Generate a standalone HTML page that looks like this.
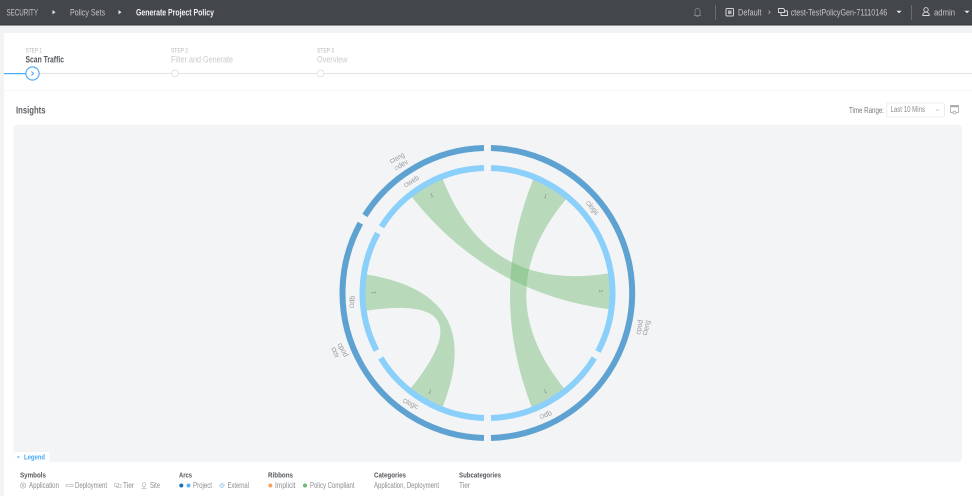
<!DOCTYPE html>
<html><head><meta charset="utf-8"><title>Generate Project Policy</title>
<style>
html,body{margin:0;padding:0;width:972px;height:496px;overflow:hidden;background:#f2f3f5}
svg{display:block;filter:blur(.3px)}
text{font-family:"Liberation Sans",sans-serif}
.h{font-size:9.5px;fill:#c4c5c7}
.s{font-size:6.5px;fill:#b5b6b8}
.d{font-size:9.5px;fill:#c9cacc}
.g{font-size:8px;fill:#8b8d91}
.b{font-size:7.5px;font-weight:bold;fill:#55585c}
.l{font-size:7.5px;fill:#9a9b9e}
.k{font-size:5.5px;fill:#888}
</style></head><body>
<svg width="972" height="496" viewBox="0 0 972 496" xmlns="http://www.w3.org/2000/svg">
<rect width="972" height="496" fill="#f2f3f5"/>
<!-- header -->
<rect width="972" height="25" fill="#43464b"/>
<rect y="24.5" width="972" height="1" fill="#33363a"/>
<text class="h" x="6.5" y="15.500" textLength="31.5" lengthAdjust="spacingAndGlyphs">SECURITY</text>
<path d="M52.5 10l3 2.2-3 2.2z" fill="#e4e4e5"/>
<text class="h" x="70" y="15.500" textLength="35" lengthAdjust="spacingAndGlyphs">Policy Sets</text>
<path d="M118.5 10l3 2.2-3 2.2z" fill="#e4e4e5"/>
<text class="h" x="136" y="15.500" textLength="78" lengthAdjust="spacingAndGlyphs" style="fill:#f4f4f4;font-weight:bold">Generate Project Policy</text>
<path d="M694 15.5h7M695 15.5v-4.5a2.5 2.5 0 0 1 5 0v4.5M696.5 16.5h2" fill="none" stroke="#7d8084" stroke-width=".9"/>
<rect x="715" y="5" width=".8" height="15" fill="#73767a"/>
<rect x="726" y="8.5" width="7.5" height="7.5" rx="1" fill="none" stroke="#d2d3d4" stroke-width="1"/>
<rect x="728" y="10.5" width="3.5" height="3.5" fill="#b5b6b8"/>
<text class="h" x="738" y="15.500" textLength="23.5" lengthAdjust="spacingAndGlyphs">Default</text>
<path d="M768.5 10.5l1.7 1.7-1.7 1.7" fill="none" stroke="#b8b9bb" stroke-width=".7"/>
<path d="M778.5 8.5h5l1 1v3h-6zM781 12.5v3h6.5v-4.5h-3" fill="none" stroke="#d8d9da" stroke-width=".9"/>
<text class="h" x="790.7" y="15.500" textLength="96.5" lengthAdjust="spacingAndGlyphs">ctest-TestPolicyGen-71110146</text>
<path d="M896.5 10.8h5l-2.500 2.500z" fill="#eee"/>
<rect x="911" y="5" width=".8" height="15" fill="#73767a"/>
<circle cx="926" cy="9.800" r="2.200" fill="none" stroke="#d8d9da" stroke-width=".9"/>
<path d="M922.800 15.500v-.8a3.200 2.500 0 0 1 6.400 0v.8z" fill="none" stroke="#d8d9da" stroke-width=".9"/>
<text class="h" x="934" y="15.500" textLength="21" lengthAdjust="spacingAndGlyphs">admin</text>
<path d="M964.500 10.800h5l-2.500 2.500z" fill="#eee"/>
<!-- panel -->
<rect x="4" y="33" width="968" height="463" fill="#fff"/>
<text class="s" x="25.500" y="52.500" textLength="16.500" lengthAdjust="spacingAndGlyphs">STEP 1</text>
<text class="s" x="171" y="52.500" textLength="17" lengthAdjust="spacingAndGlyphs">STEP 2</text>
<text class="s" x="317" y="52.500" textLength="17" lengthAdjust="spacingAndGlyphs">STEP 3</text>
<text class="d" x="25.500" y="62.500" textLength="38.500" lengthAdjust="spacingAndGlyphs" style="fill:#55585c;font-weight:bold">Scan Traffic</text>
<text class="d" x="171" y="62.500" textLength="62" lengthAdjust="spacingAndGlyphs">Filter and Generate</text>
<text class="d" x="317" y="62.500" textLength="30.500" lengthAdjust="spacingAndGlyphs">Overview</text>
<rect x="4" y="73" width="968" height="1" fill="#e3e4e6"/>
<rect x="4" y="73" width="23" height="1.200" fill="#4aa8f5"/>
<circle cx="32.500" cy="73.500" r="6.600" fill="#fff" stroke="#4aa8f5" stroke-width="1.100"/>
<path d="M31.500 71.500l2 2-2 2" fill="none" stroke="#4aa8f5" stroke-width="1"/>
<circle cx="175" cy="73.500" r="3.400" fill="#fff" stroke="#dfe0e2" stroke-width=".9"/>
<circle cx="320.500" cy="73.500" r="3.400" fill="#fff" stroke="#dfe0e2" stroke-width=".9"/>
<rect x="4" y="90" width="968" height="1" fill="#f6f7f8"/>
<text x="16" y="113.500" textLength="29.500" lengthAdjust="spacingAndGlyphs" style="font-size:10.500px;font-weight:bold;fill:#5f6266">Insights</text>
<text class="g" x="849" y="113" textLength="35" lengthAdjust="spacingAndGlyphs" style="fill:#76787c">Time Range:</text>
<rect x="886.700" y="103" width="57.800" height="14" rx="2" fill="#fff" stroke="#e6e7e9" stroke-width=".8"/>
<text class="g" x="890.500" y="112" textLength="34.500" lengthAdjust="spacingAndGlyphs">Last 10 Mins</text>
<path d="M935.800 109.300l1.500 1.500 1.500-1.500" fill="none" stroke="#b5b6b8" stroke-width=".6"/>
<rect x="950.500" y="105.500" width="8" height="7" fill="none" stroke="#a5a7aa" stroke-width=".8"/>
<rect x="950.500" y="105.500" width="8" height="1.700" fill="#a5a7aa"/>
<circle cx="954.500" cy="112.500" r="1.500" fill="#fff" stroke="#a5a7aa" stroke-width=".7"/>
<!-- chart -->
<rect x="13.500" y="124.500" width="948.500" height="337.500" rx="4" fill="#f3f4f6"/>
<g fill="#74bb76" fill-opacity=".47">
<path d="M411.700 196.700A122 122 0 0 1 442.700 179.300Q487.500 293 609.300 273.300A122 122 0 0 1 609.300 309.300Q487.500 293 411.700 196.700Z"/>
<path d="M533.300 179.300A122 122 0 0 1 566 199.300Q487.500 293 564 388.300A122 122 0 0 1 531.700 407.300Q487.500 293 533.300 179.300Z"/>
<path d="M365 274.300A122 122 0 0 0 365.700 310.700Q487.500 293 410.700 388.300A122 122 0 0 0 442.700 406.700Q487.500 293 365 274.300Z"/>
</g>
<g fill="none" stroke="#5ea2d1" stroke-width="6">
<path d="M491 148.050A145 145 0 0 1 491 437.950"/>
<path d="M484 437.950A145 145 0 0 1 360.400 223.200"/>
<path d="M364.900 215.500A145 145 0 0 1 484 148.050"/>
</g>
<g fill="none" stroke="#8bd0fb" stroke-width="6">
<path d="M491 168.050A125 125 0 0 1 598 351.500"/>
<path d="M594.300 357.900A125 125 0 0 1 491 417.950"/>
<path d="M484 417.950A125 125 0 0 1 380.800 358.100"/>
<path d="M376.500 350.500A125 125 0 0 1 377.700 233.300"/>
<path d="M381.500 226.800A125 125 0 0 1 484 168.050"/>
</g>
<g>
<g transform="translate(398 158) rotate(-30)"><rect x="-8" y="-2" width="4" height="3" fill="none" stroke="#999" stroke-width=".6"/><text class="l" x="-3" y="2" textLength="10" lengthAdjust="spacingAndGlyphs">eng</text></g>
<g transform="translate(401.700 165) rotate(-30)"><circle cx="-6" cy="0" r="1.500" fill="none" stroke="#aaa" stroke-width=".5"/><text class="l" x="-4" y="2" textLength="11" lengthAdjust="spacingAndGlyphs">dev</text></g>
<g transform="translate(411.700 181.700) rotate(-32)"><rect x="-8" y="-2" width="3.500" height="3.500" rx="1" fill="none" stroke="#999" stroke-width=".5"/><text class="l" x="-4" y="2" textLength="12" lengthAdjust="spacingAndGlyphs">web</text></g>
<g transform="translate(592.300 208.300) rotate(50)"><rect x="-8" y="-2" width="3.500" height="3.500" rx="1" fill="none" stroke="#999" stroke-width=".5"/><text class="l" x="-4" y="2" textLength="12" lengthAdjust="spacingAndGlyphs">logic</text></g>
<g transform="translate(639.700 326.700) rotate(-80)"><text class="l" x="-8" y="2" textLength="15" lengthAdjust="spacingAndGlyphs">cpod</text></g>
<g transform="translate(646.700 327.700) rotate(-80)"><rect x="-7" y="-2" width="4" height="3" fill="none" stroke="#999" stroke-width=".6"/><text class="l" x="-2.500" y="2" textLength="10" lengthAdjust="spacingAndGlyphs">eng</text></g>
<g transform="translate(546 415) rotate(-22)"><rect x="-6" y="-2" width="3.500" height="3.500" rx="1" fill="none" stroke="#999" stroke-width=".5"/><text class="l" x="-2" y="2" textLength="8" lengthAdjust="spacingAndGlyphs">db</text></g>
<g transform="translate(410.700 404) rotate(25)"><rect x="-8" y="-2" width="3.500" height="3.500" rx="1" fill="none" stroke="#999" stroke-width=".5"/><text class="l" x="-4" y="2" textLength="12" lengthAdjust="spacingAndGlyphs">logic</text></g>
<g transform="translate(352.300 301.700) rotate(-85)"><rect x="-6" y="-2" width="3.500" height="3.500" rx="1" fill="none" stroke="#999" stroke-width=".5"/><text class="l" x="-2" y="2" textLength="8" lengthAdjust="spacingAndGlyphs">db</text></g>
<g transform="translate(342.700 350) rotate(62)"><text class="l" x="-7.500" y="2" textLength="15" lengthAdjust="spacingAndGlyphs">cpod</text></g>
<g transform="translate(335 352.700) rotate(62)"><rect x="-5" y="-2" width="3.500" height="3" fill="none" stroke="#999" stroke-width=".6"/><text class="l" x="-1" y="2" textLength="6" lengthAdjust="spacingAndGlyphs">ctv</text></g>
<g transform="translate(431.500 195) rotate(-22)"><text class="k" text-anchor="middle" y="2">1</text></g>
<g transform="translate(545.500 196) rotate(20)"><text class="k" text-anchor="middle" y="2">1</text></g>
<g transform="translate(601 291) rotate(90)"><text class="k" text-anchor="middle" y="2">1</text></g>
<g transform="translate(545 391) rotate(-25)"><text class="k" text-anchor="middle" y="2">1</text></g>
<g transform="translate(430 391.500) rotate(20)"><text class="k" text-anchor="middle" y="2">1</text></g>
<g transform="translate(373.500 292.500) rotate(-90)"><text class="k" text-anchor="middle" y="2">1</text></g>
</g>
<!-- legend -->
<rect x="14" y="452" width="35.500" height="11" fill="#fff"/>
<path d="M16.800 456.500h3l-1.500 1.700z" fill="#4aa8f5"/>
<text x="24" y="459.700" textLength="21" lengthAdjust="spacingAndGlyphs" style="font-size:7.500px;font-weight:bold;fill:#4aa8f5">Legend</text>
<text class="b" x="20" y="477.500" textLength="26" lengthAdjust="spacingAndGlyphs">Symbols</text>
<circle cx="23" cy="485.500" r="2.600" fill="none" stroke="#aaacaf" stroke-width=".7"/><circle cx="23" cy="485.500" r="1.200" fill="#c4c5c7"/>
<text class="g" x="29" y="488" textLength="30" lengthAdjust="spacingAndGlyphs">Application</text>
<rect x="66" y="484.500" width="7" height="2" fill="none" stroke="#b5b6b8" stroke-width=".6"/>
<text class="g" x="75" y="488" textLength="32" lengthAdjust="spacingAndGlyphs">Deployment</text>
<path d="M114.500 483.500h4v3h-4zM116.500 485v2.500h4.500v-3h-2" fill="none" stroke="#aaacaf" stroke-width=".6"/>
<text class="g" x="123" y="488" textLength="11" lengthAdjust="spacingAndGlyphs">Tier</text>
<circle cx="144" cy="484.500" r="1.800" fill="none" stroke="#aaacaf" stroke-width=".6"/><path d="M141.500 488.300h5M144 486.500v1.800" stroke="#aaacaf" stroke-width=".6"/>
<text class="g" x="150" y="488" textLength="10" lengthAdjust="spacingAndGlyphs">Site</text>
<text class="b" x="179" y="477.500" textLength="13" lengthAdjust="spacingAndGlyphs">Arcs</text>
<circle cx="181.300" cy="485.500" r="2" fill="#1a6fb8"/><circle cx="188.500" cy="485.500" r="2" fill="#5ab4f5"/>
<text class="g" x="193" y="488" textLength="19" lengthAdjust="spacingAndGlyphs">Project</text>
<path d="M222 483l2.500 2.500-2.500 2.500-2.500-2.500z" fill="#dbeefc" stroke="#8bc5ef" stroke-width=".6"/>
<text class="g" x="227.500" y="488" textLength="21.500" lengthAdjust="spacingAndGlyphs">External</text>
<text class="b" x="268" y="477.500" textLength="25" lengthAdjust="spacingAndGlyphs">Ribbons</text>
<circle cx="270.300" cy="485.500" r="2" fill="#f4a460"/>
<text class="g" x="275" y="488" textLength="20.500" lengthAdjust="spacingAndGlyphs">Implicit</text>
<circle cx="305" cy="485.500" r="2" fill="#6dbb6d"/>
<text class="g" x="310" y="488" textLength="44.500" lengthAdjust="spacingAndGlyphs">Policy Compliant</text>
<text class="b" x="374" y="477.500" textLength="32" lengthAdjust="spacingAndGlyphs">Categories</text>
<text class="g" x="374" y="488" textLength="65" lengthAdjust="spacingAndGlyphs">Application, Deployment</text>
<text class="b" x="459" y="477.500" textLength="42" lengthAdjust="spacingAndGlyphs">Subcategories</text>
<text class="g" x="459" y="488" textLength="11" lengthAdjust="spacingAndGlyphs">Tier</text>
</svg>
</body></html>
